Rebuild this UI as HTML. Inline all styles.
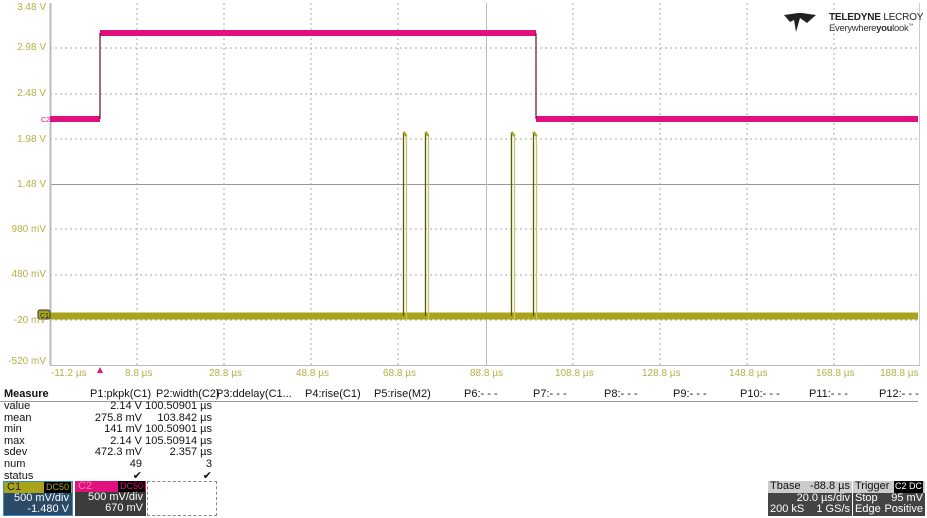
<!DOCTYPE html>
<html><head><meta charset="utf-8"><style>
body{margin:0;width:927px;height:518px;background:#fff;font-family:"Liberation Sans",Arial,sans-serif;position:relative;overflow:hidden}
.ax{position:absolute;color:#b5b046;font-size:10px;white-space:nowrap}
.yl{position:absolute;left:0;width:46px;text-align:right;color:#b5b046;font-size:10px;white-space:nowrap}
.m{position:absolute;font-size:11px;color:#111;white-space:nowrap}
.r{text-align:right}
</style></head><body>
<svg width="927" height="375" style="position:absolute;left:0;top:0">
<g stroke="#aaa" stroke-width="1" stroke-dasharray="2,3">
<line x1="137" y1="3" x2="137" y2="365"/><line x1="224" y1="3" x2="224" y2="365"/><line x1="311" y1="3" x2="311" y2="365"/><line x1="398" y1="3" x2="398" y2="365"/>
<line x1="573" y1="3" x2="573" y2="365"/><line x1="660" y1="3" x2="660" y2="365"/><line x1="747" y1="3" x2="747" y2="365"/><line x1="834" y1="3" x2="834" y2="365"/>
<line x1="50" y1="48" x2="920" y2="48"/><line x1="50" y1="94" x2="920" y2="94"/><line x1="50" y1="139" x2="920" y2="139"/>
<line x1="50" y1="229" x2="920" y2="229"/><line x1="50" y1="275" x2="920" y2="275"/><line x1="50" y1="320" x2="920" y2="320"/>
</g>
<line x1="50" y1="184.5" x2="920" y2="184.5" stroke="#999"/>
<line x1="486.5" y1="3" x2="486.5" y2="365" stroke="#bbb"/>
<line x1="50.5" y1="3" x2="50.5" y2="365" stroke="#bbb" stroke-width="2"/>
<line x1="50" y1="365.5" x2="920" y2="365.5" stroke="#bbb"/>
<line x1="919.5" y1="3" x2="919.5" y2="365" stroke="#ccc"/>
<path d="M50 119 H100 M100 33 H536 M536 119 H918" fill="none" stroke="#e0117f" stroke-width="6"/>
<path d="M100 119 V33 M536 33 V119" stroke="#5a1030" stroke-width="1.2"/>
<path d="M50 316 H918" stroke="#a9a419" stroke-width="7"/>
<g stroke-width="1.3" fill="none">
<path d="M403.5 316 V132 M425.5 316 V132 M511.5 316 V132 M533.5 316 V132" stroke="#5b5800"/>
<path d="M406.5 136 V320 M428.5 136 V320 M514.5 136 V320 M536.5 136 V320" stroke="#c8c46a"/>
<path d="M403.5 132 L406.5 136 M425.5 132 L428.5 136 M511.5 132 L514.5 136 M533.5 132 L536.5 136" stroke="#a9a419" stroke-width="2.5"/>
</g>
<rect x="38" y="310" width="12" height="9" rx="2" fill="#a9a419" stroke="#333" stroke-width="1"/>
<text x="40" y="318" font-size="7" font-family="Liberation Sans" fill="#222">C1</text>
<text x="41" y="122" font-size="7" font-family="Liberation Sans" fill="#e0117f">C2</text>
<polygon points="97,373 100,367 103,373" fill="#e0117f"/>
<polygon points="784,15 798,13 802,13 816,15 807,23 800,18 796,32 794,20 790,22" fill="#222"/>
</svg>
<div class="yl" style="top:2px">3.48 V</div>
<div class="yl" style="top:42px">2.98 V</div>
<div class="yl" style="top:88px">2.48 V</div>
<div class="yl" style="top:134px">1.98 V</div>
<div class="yl" style="top:179px">1.48 V</div>
<div class="yl" style="top:224px">980 mV</div>
<div class="yl" style="top:269px">480 mV</div>
<div class="yl" style="top:315px">-20 mV</div>
<div class="yl" style="top:356px">-520 mV</div>
<div class="ax" style="left:51px;top:368px">-11.2 µs</div>
<div class="ax" style="left:125px;top:368px">8.8 µs</div>
<div class="ax" style="left:209px;top:368px">28.8 µs</div>
<div class="ax" style="left:296px;top:368px">48.8 µs</div>
<div class="ax" style="left:383px;top:368px">68.8 µs</div>
<div class="ax" style="left:470px;top:368px">88.8 µs</div>
<div class="ax" style="left:555px;top:368px">108.8 µs</div>
<div class="ax" style="left:642px;top:368px">128.8 µs</div>
<div class="ax" style="left:729px;top:368px">148.8 µs</div>
<div class="ax" style="left:816px;top:368px">168.8 µs</div>
<div class="ax" style="left:880px;top:368px">188.8 µs</div>
<div style="position:absolute;left:829px;top:12px;font-size:10px;font-weight:bold;color:#222;white-space:nowrap;letter-spacing:-0.2px">TELEDYNE <span style="font-weight:normal">LECROY</span></div>
<div style="position:absolute;left:829px;top:23px;font-size:9.5px;color:#333;white-space:nowrap;letter-spacing:-0.3px">Everywhere<b>you</b>look<sup style="font-size:5px">™</sup></div>
<div style="position:absolute;left:0;top:401px;width:918px;border-top:1px solid #999"></div>
<div class="m" style="left:4px;top:388px;font-weight:bold">Measure</div>
<div class="m" style="left:90px;top:388px">P1:pkpk(C1)</div>
<div class="m" style="left:156px;top:388px">P2:width(C2)</div>
<div class="m" style="left:216px;top:388px">P3:ddelay(C1...</div>
<div class="m" style="left:305px;top:388px">P4:rise(C1)</div>
<div class="m" style="left:374px;top:388px">P5:rise(M2)</div>
<div class="m" style="left:464px;top:388px">P6:- - -</div>
<div class="m" style="left:533px;top:388px">P7:- - -</div>
<div class="m" style="left:604px;top:388px">P8:- - -</div>
<div class="m" style="left:673px;top:388px">P9:- - -</div>
<div class="m" style="left:740px;top:388px">P10:- - -</div>
<div class="m" style="left:809px;top:388px">P11:- - -</div>
<div class="m" style="left:879px;top:388px">P12:- - -</div>
<div class="m" style="left:4px;top:401px;line-height:11.6px">value<br>mean<br>min<br>max<br>sdev<br>num<br>status</div>
<div class="m r" style="left:60px;width:82px;top:401px;line-height:11.6px">2.14 V<br>275.8 mV<br>141 mV<br>2.14 V<br>472.3 mV<br>49<br>✔</div>
<div class="m r" style="left:140px;width:72px;top:401px;line-height:11.6px">100.50901 µs<br>103.842 µs<br>100.50901 µs<br>105.50914 µs<br>2.357 µs<br>3<br>✔</div>
<div style="position:absolute;left:3px;top:481px;width:70px;height:35px;background:#2a4a66;border:1px solid #3a8ad0;box-sizing:border-box;font-size:11px;color:#fff">
<div style="background:#a9a419;height:11px;color:#222;padding-left:3px;line-height:11px;position:relative">C1<span style="position:absolute;right:1px;top:0;background:#000;color:#a9a419;font-size:9px;padding:0 2px">DC50</span></div>
<div style="text-align:right;padding-right:3px;line-height:11px">500 mV/div<br>-1.480 V</div></div>
<div style="position:absolute;left:75px;top:481px;width:71px;height:35px;background:#3c3c3c;font-size:11px;color:#fff">
<div style="background:#e0117f;height:11px;color:#f7a;padding-left:3px;line-height:11px;position:relative">C2<span style="position:absolute;right:1px;top:0;background:#000;color:#e0117f;font-size:9px;padding:0 2px">DC50</span></div>
<div style="text-align:right;padding-right:3px;line-height:11px">500 mV/div<br>670 mV</div></div>
<div style="position:absolute;left:147px;top:481px;width:70px;height:35px;border:1px dashed #888;box-sizing:border-box"></div>
<div style="position:absolute;left:768px;top:481px;width:84px;height:35px;background:#444;font-size:11px;color:#fff;line-height:11.5px">
<div style="background:#ccc;color:#111;padding:0 2px;display:flex;justify-content:space-between"><span>Tbase</span><span>-88.8 µs</span></div>
<div style="text-align:right;padding-right:2px">20.0 µs/div</div>
<div style="display:flex;justify-content:space-between;padding:0 2px"><span>200 kS</span><span>1 GS/s</span></div></div>
<div style="position:absolute;left:853px;top:481px;width:72px;height:35px;background:#444;font-size:11px;color:#fff;line-height:11.5px">
<div style="background:#ccc;color:#111;padding:0 2px;display:flex;justify-content:space-between"><span>Trigger</span><span style="background:#000;color:#fff;font-size:9px;padding:0 1px">C2 DC</span></div>
<div style="display:flex;justify-content:space-between;padding:0 2px"><span>Stop</span><span>95 mV</span></div>
<div style="display:flex;justify-content:space-between;padding:0 2px"><span>Edge</span><span>Positive</span></div></div>
</body></html>
